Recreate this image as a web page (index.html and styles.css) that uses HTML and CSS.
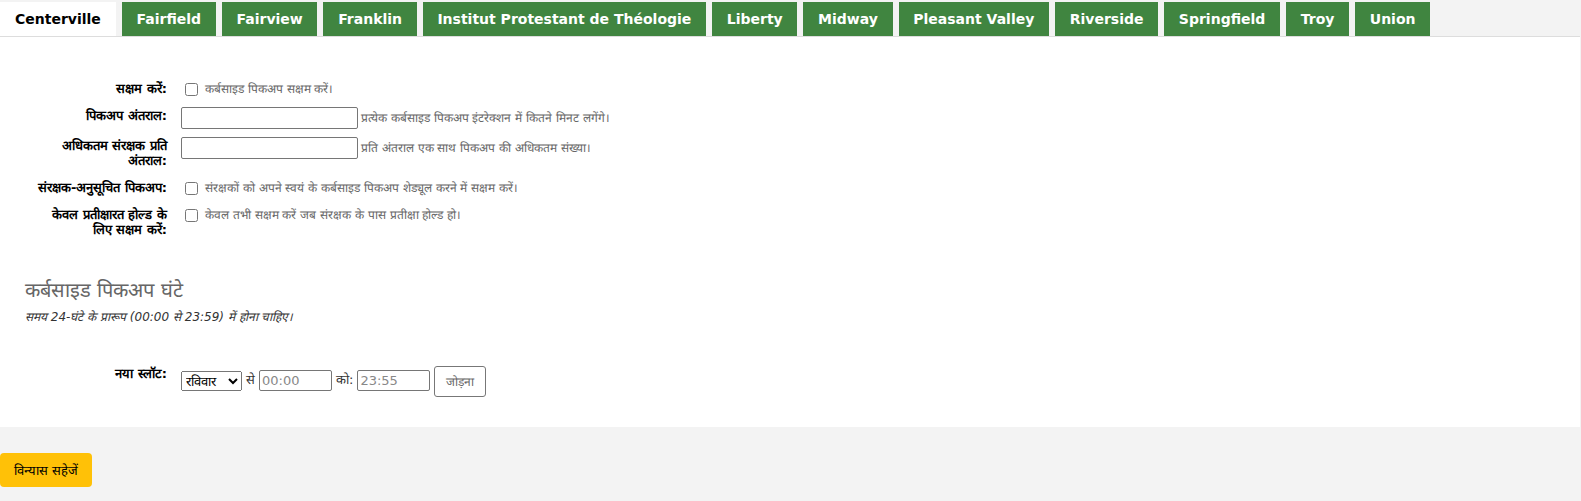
FILE: index.html
```html
<!DOCTYPE html>
<html lang="hi">
<head>
    <meta charset="UTF-8">
    <meta name="viewport" content="width=device-width, initial-scale=1.0">
    <title>कर्बसाइड पिकअप</title>
    <link rel="stylesheet" href="styles.css">
</head>
<body>

    <ul class="tabs">
        <li class="tab active">Centerville</li>
        <li class="tab">Fairfield</li>
        <li class="tab">Fairview</li>
        <li class="tab">Franklin</li>
        <li class="tab">Institut Protestant de Théologie</li>
        <li class="tab">Liberty</li>
        <li class="tab">Midway</li>
        <li class="tab">Pleasant Valley</li>
        <li class="tab">Riverside</li>
        <li class="tab">Springfield</li>
        <li class="tab">Troy</li>
        <li class="tab">Union</li>
    </ul>

    <div class="panel">
        <ol class="rows">
            <li>
                <label class="name" for="enabled">सक्षम करें:</label>
                <input type="checkbox" id="enabled">
                <span class="hint">कर्बसाइड पिकअप सक्षम करें।</span>
            </li>
            <li>
                <label class="name" for="interval">पिकअप अंतराल:</label>
                <input type="text" class="field" id="interval">
                <span class="hint">प्रत्येक कर्बसाइड पिकअप इंटरेक्शन में कितने मिनट लगेंगे।</span>
            </li>
            <li>
                <label class="name" for="max">अधिकतम संरक्षक प्रति अंतराल:</label>
                <input type="text" class="field" id="max">
                <span class="hint">प्रति अंतराल एक साथ पिकअप की अधिकतम संख्या।</span>
            </li>
            <li>
                <label class="name" for="patron">संरक्षक-अनुसूचित पिकअप:</label>
                <input type="checkbox" id="patron">
                <span class="hint">संरक्षकों को अपने स्वयं के कर्बसाइड पिकअप शेड्यूल करने में सक्षम करें।</span>
            </li>
            <li>
                <label class="name" for="waiting">केवल प्रतीक्षारत होल्ड के<br>लिए सक्षम करें:</label>
                <input type="checkbox" id="waiting">
                <span class="hint">केवल तभी सक्षम करें जब संरक्षक के पास प्रतीक्षा होल्ड हो।</span>
            </li>
        </ol>

        <h3 class="hours-title">कर्बसाइड पिकअप घंटे</h3>
        <p class="hours-note">समय 24-घंटे के प्रारूप (00:00 से 23:59) में होना चाहिए।</p>

        <div class="slot-row">
            <label class="name">नया स्लॉट:</label>
            <div class="slot-controls">
                <select class="day">
                    <option>रविवार</option>
                    <option>सोमवार</option>
                    <option>मंगलवार</option>
                </select>
                <span>से</span>
                <input type="text" class="time" placeholder="00:00">
                <span>को:</span>
                <input type="text" class="time" placeholder="23:55">
                <button class="add">जोड़ना</button>
            </div>
        </div>
    </div>

    <div class="actions">
        <button class="save">विन्यास सहेजें</button>
    </div>

</body>
</html>
```

FILE: styles.css
```css
body {
    margin: 0;
    background: #f3f3f3;
    font-family: "DejaVu Sans", sans-serif;
    color: #000;
}

.tabs {
    display: flex;
    gap: 6px;
    margin: 0;
    padding: 2px 0 0;
    list-style: none;
}

.tab {
    height: 34px;
    line-height: 34px;
    padding: 0 14.7px;
    background: #408540;
    color: #fff;
    font-size: 14px;
    font-weight: bold;
}

.tab.active {
    background: #fff;
    color: #000;
    padding: 0 15px;
}

.panel {
    margin-right: 1px;
    padding: 43px 0 30px;
    background: #fff;
    border-top: 1px solid #ddd;
}

.rows {
    margin: 0;
    padding: 0;
    list-style: none;
}

.rows li {
    display: flex;
    align-items: flex-start;
    margin-bottom: 8px;
}

.name {
    flex: none;
    box-sizing: border-box;
    width: 167px;
    padding: 1px 0 3px 27px;
    margin-right: 14px;
    text-align: right;
    font-size: 13px;
    font-weight: bold;
    line-height: 15px;
}

input[type="checkbox"] {
    width: 13px;
    height: 13px;
    margin: 3px 7px 0 4px;
}

.field {
    box-sizing: border-box;
    width: 177px;
    height: 22px;
    margin: 0 3px 0 0;
    border: 1px solid #767676;
    border-radius: 2px;
}

.hint {
    font-size: 12px;
    color: #666;
    line-height: 18px;
}

.field + .hint {
    line-height: 22px;
}

.hours-title {
    margin: 36px 0 0 25px;
    font-size: 20px;
    font-weight: normal;
    color: #666;
}

.hours-note {
    margin: 5px 0 0 25px;
    font-size: 12px;
    font-style: italic;
    color: #333;
}

.slot-row {
    display: flex;
    align-items: flex-start;
    margin-top: 41px;
}

.slot-row .name {
    padding-top: 0;
}

.slot-controls {
    display: flex;
    align-items: flex-start;
    gap: 4px;
    font-size: 13px;
    color: #333;
}

.slot-controls span {
    line-height: 20px;
    margin-top: 4px;
}

.day {
    width: 61px;
    height: 20px;
    margin-top: 5px;
    font-size: 13px;
}

.time {
    box-sizing: border-box;
    width: 73px;
    height: 21px;
    margin-top: 4px;
    border: 1px solid #767676;
    border-radius: 2px;
    font-family: "DejaVu Sans", sans-serif;
    font-size: 13px;
}

.time::placeholder {
    color: #888;
}

.add {
    height: 31px;
    padding: 0 11px;
    background: #fff;
    border: 1px solid #777;
    border-radius: 3px;
    font-size: 12px;
    color: #666;
}

.actions {
    padding-top: 26px;
}

.save {
    height: 34px;
    padding: 0 14px;
    background: #ffc107;
    border: none;
    border-radius: 4px;
    font-family: "DejaVu Sans", sans-serif;
    font-size: 13px;
    color: #000;
}
```
